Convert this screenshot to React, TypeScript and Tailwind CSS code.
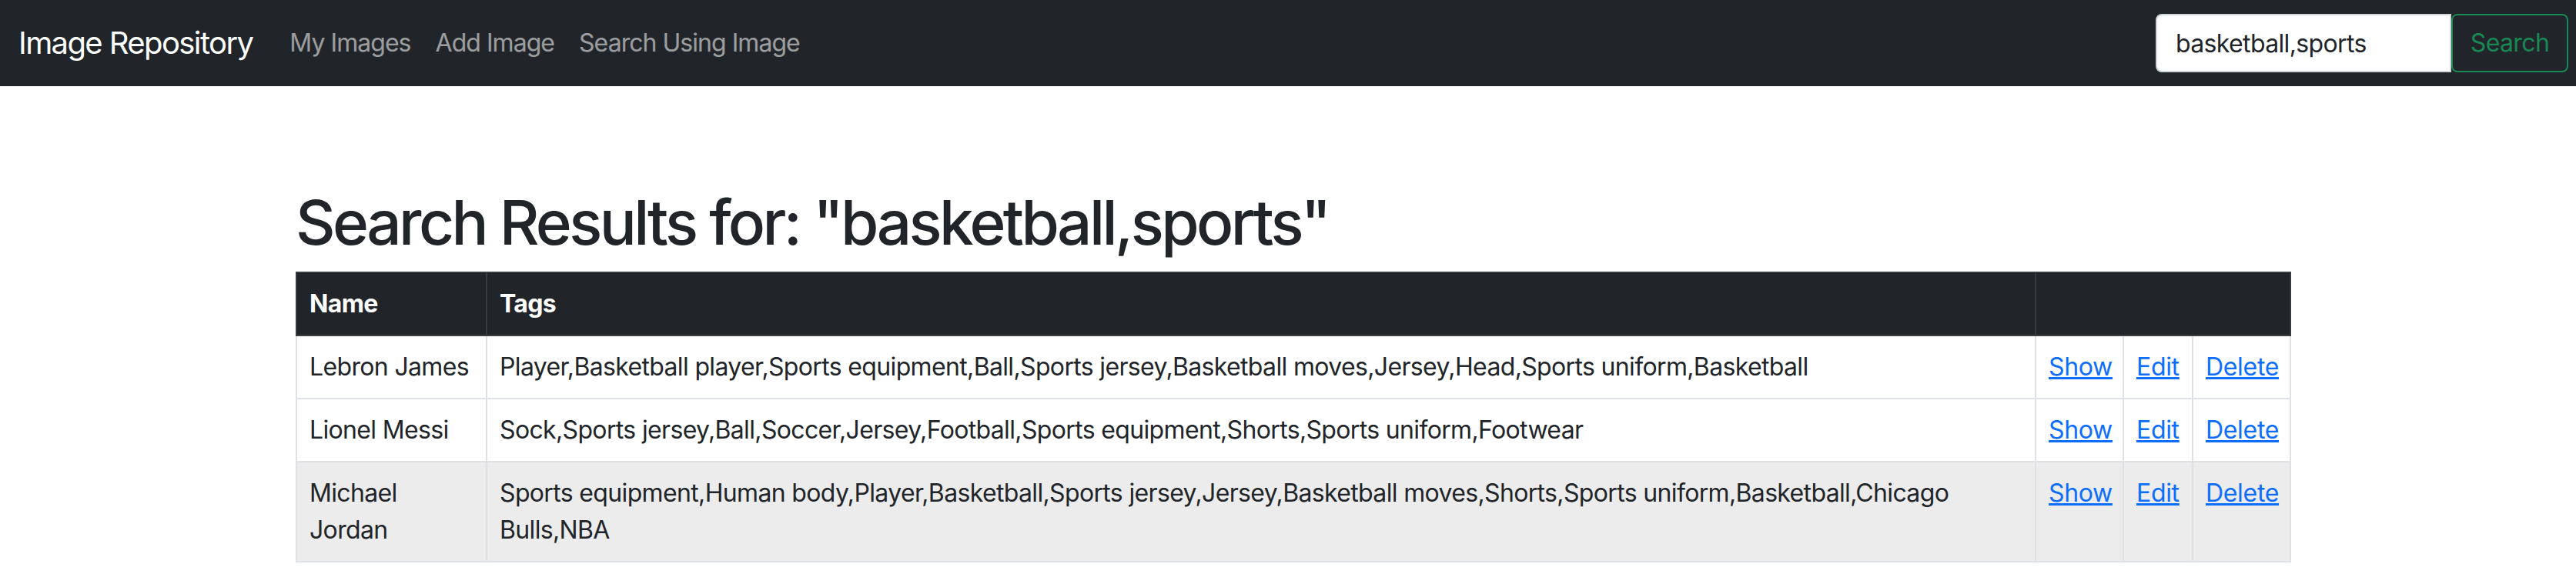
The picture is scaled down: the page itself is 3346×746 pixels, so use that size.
import React from 'react';

const rows = [
  {
    name: 'Lebron James',
    tags: 'Player,Basketball player,Sports equipment,Ball,Sports jersey,Basketball moves,Jersey,Head,Sports uniform,Basketball',
    hover: false,
  },
  {
    name: 'Lionel Messi',
    tags: 'Sock,Sports jersey,Ball,Soccer,Jersey,Football,Sports equipment,Shorts,Sports uniform,Footwear',
    hover: false,
  },
  {
    name: 'Michael Jordan',
    tags: 'Sports equipment,Human body,Player,Basketball,Sports jersey,Jersey,Basketball moves,Shorts,Sports uniform,Basketball,Chicago Bulls,NBA',
    hover: true,
  },
];

export default function App() {
  return (
    <div className="w-[3346px] h-[746px] overflow-hidden bg-white font-[Inter,sans-serif] text-[#212529]">
      <div className="w-[3360px]">
        <nav className="h-[112px] bg-[#212529] flex items-center justify-between px-[24px] py-[16px]">
          <div className="flex items-center">
            <a href="#" className="text-white text-[40px] leading-[60px] py-[10px] mr-[32px] tracking-[-0.04em]">Image Repository</a>
            <ul className="flex items-center">
              <li><a href="#" className="block px-[16px] py-[16px] text-[32px] leading-[48px] text-white/55 tracking-[-0.96px]">My Images</a></li>
              <li><a href="#" className="block px-[16px] py-[16px] text-[32px] leading-[48px] text-white/55 tracking-[-0.96px]">Add Image</a></li>
              <li><a href="#" className="block px-[16px] py-[16px] text-[32px] leading-[48px] text-white/55 tracking-[-0.96px]">Search Using Image</a></li>
            </ul>
          </div>
          <form className="flex items-center" onSubmit={e => e.preventDefault()}>
            <input
              defaultValue="basketball,sports"
              className="w-[384px] h-[76px] bg-white border-2 border-[#ced4da] rounded-l-[8px] px-[24px] text-[32px] leading-[48px] text-[#212529] tracking-[-0.64px] outline-none"
            />
            <button className="h-[76px] w-[152px] border-2 border-[#198754] rounded-[8px] text-[#198754] text-[32px] leading-[48px] tracking-[-0.64px]">
              Search
            </button>
          </form>
        </nav>

        <div className="mx-auto w-[2640px] px-[24px]">
          <h1 className="mt-[129px] mb-[16px] text-[80px] leading-[96px] font-medium tracking-[-0.045em]">
            {'Search Results for: "basketball,sports"'}
          </h1>
          <table className="w-full table-fixed border-collapse text-[32px] leading-[48px] tracking-[-0.65px]">
            <colgroup>
              <col className="w-[247px]" />
              <col className="w-[2012px]" />
              <col className="w-[114px]" />
              <col className="w-[90px]" />
              <col />
            </colgroup>
            <thead>
              <tr className="bg-[#212529] text-white">
                <th className="text-left font-bold px-[16px] py-[16px] border-2 border-[#373b3e] border-b-[#3a3e42]">Name</th>
                <th className="text-left font-bold px-[16px] py-[16px] border-2 border-[#373b3e] border-b-[#3a3e42]">Tags</th>
                <th colSpan={3} className="px-[16px] py-[16px] border-2 border-[#373b3e] border-b-[#3a3e42]"></th>
              </tr>
            </thead>
            <tbody>
              {rows.map(r => (
                <tr key={r.name} className={r.hover ? 'bg-[#ececec]' : 'bg-white'}>
                  <td className={'align-top px-[16px] py-[16px] border-2 border-[#dee2e6] ' + (r.hover ? '' : 'whitespace-nowrap')}>{r.name}</td>
                  <td className="align-top px-[16px] py-[16px] border-2 border-[#dee2e6]">{r.tags}</td>
                  <td className="align-top px-[16px] py-[16px] border-2 border-[#dee2e6] tracking-[-0.32px]">
                    <a href="#" className="text-[#0d6efd] underline">Show</a>
                  </td>
                  <td className="align-top px-[16px] py-[16px] border-2 border-[#dee2e6] tracking-[-0.32px]">
                    <a href="#" className="text-[#0d6efd] underline">Edit</a>
                  </td>
                  <td className="align-top px-[16px] py-[16px] border-2 border-[#dee2e6] tracking-[-0.32px]">
                    <a href="#" className="text-[#0d6efd] underline">Delete</a>
                  </td>
                </tr>
              ))}
            </tbody>
          </table>
        </div>
      </div>
    </div>
  );
}
